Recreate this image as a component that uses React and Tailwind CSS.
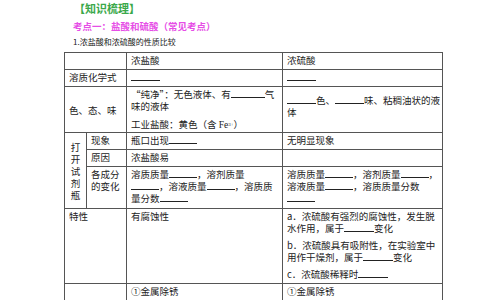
const Blank = ({ w = 'w-[27px]' }) => (
  <span className={`inline-block ${w} border-b border-[#222] align-baseline h-[9px]`} />
);

const Line = ({ children }) => <div className="whitespace-nowrap h-[12px]">{children}</div>;

export default function App() {
  const td = 'border border-[#555] align-top px-[4px] pt-[1px]';
  return (
    <div
      className="w-[484px] h-[300px] overflow-hidden bg-white text-[#222]"
      style={{ fontFamily: '"Noto Sans CJK SC", "Noto Sans", sans-serif' }}
    >
      <div className="pl-[74px] pt-[1px] text-[11px] leading-[15px] font-bold text-[#3aa84a]">【知识梳理】</div>
      <div className="pl-[73px] pt-[3px] text-[9.5px] leading-[14px] font-bold text-[#e64ee6]">
        考点一：盐酸和硫酸（常见考点）
      </div>
      <div className="pl-[73px] pt-[3px] text-[8px] leading-[12px] text-[#222]">1.浓盐酸和浓硫酸的性质比较</div>

      <table className="ml-[64px] mt-[4px] w-[378px] table-fixed border-collapse text-[9.5px] leading-[12px]">
        <colgroup>
          <col className="w-[22px]" />
          <col className="w-[40px]" />
          <col className="w-[156px]" />
          <col className="w-[160px]" />
        </colgroup>
        <tbody>
          <tr className="h-[17px]">
            <td className={`${td} h-[17px]`} colSpan={2}></td>
            <td className={td}>浓盐酸</td>
            <td className={td}>浓硫酸</td>
          </tr>
          <tr className="h-[17px]">
            <td className={`${td} h-[17px]`} colSpan={2}>溶质化学式</td>
            <td className={td}><Blank w="w-[29px]" /></td>
            <td className={td}><Blank w="w-[29px]" /></td>
          </tr>
          <tr className="h-[46px]">
            <td className={`${td} h-[46px] !align-middle`} colSpan={2}>色、态、味</td>
            <td className={td}>
              <Line>“纯净”：无色液体、有<Blank w="w-[34px]" />气</Line>
              <Line>味的液体</Line>
              <div className="mt-[6px] whitespace-nowrap h-[12px]">
                工业盐酸：黄色（含 <span style={{ fontFamily: '"Liberation Serif", serif' }}>Fe<sup className="text-[5px]">3+</sup></span>）
              </div>
            </td>
            <td className={`${td} !align-middle`}>
              <Line><Blank w="w-[29px]" />色、<Blank w="w-[29px]" />味、粘稠油状的液</Line>
              <Line>体</Line>
              <div className="h-[8px]" />
            </td>
          </tr>
          <tr className="h-[17px]">
            <td className={`${td} !align-middle !px-0 text-center`} rowSpan={3}>
              <div className="leading-[12px]">
                <div>打</div><div>开</div><div>试</div><div>剂</div><div>瓶</div>
              </div>
            </td>
            <td className={`${td} h-[17px]`}>现象</td>
            <td className={td}>瓶口出现<Blank w="w-[28px]" /></td>
            <td className={td}>无明显现象</td>
          </tr>
          <tr className="h-[17px]">
            <td className={`${td} h-[17px]`}>原因</td>
            <td className={td}>浓盐酸易</td>
            <td className={td}></td>
          </tr>
          <tr className="h-[42px]">
            <td className={`${td} h-[42px]`}><div>各成分</div><div>的变化</div></td>
            <td className={td}>
              <Line>溶质质量<Blank w="w-[28px]" />，溶剂质量</Line>
              <Line><Blank w="w-[28px]" />，溶液质量<Blank w="w-[28px]" />，溶质质</Line>
              <Line>量分数<Blank w="w-[28px]" /></Line>
            </td>
            <td className={td}>
              <Line>溶质质量<Blank w="w-[28px]" />，溶剂质量<Blank w="w-[28px]" />，</Line>
              <Line>溶液质量<Blank w="w-[28px]" />，溶质质量分数</Line>
              <Line><Blank w="w-[28px]" /></Line>
            </td>
          </tr>
          <tr className="h-[75px]">
            <td className={`${td} h-[75px]`} colSpan={2}>特性</td>
            <td className={td}>有腐蚀性</td>
            <td className={td}>
              <Line>a．浓硫酸有强烈的腐蚀性，发生脱</Line>
              <Line>水作用，属于<Blank w="w-[30px]" />变化</Line>
              <div className="h-[5px]" />
              <Line>b．浓硫酸具有吸附性，在实验室中</Line>
              <Line>用作干燥剂，属于<Blank w="w-[30px]" />变化</Line>
              <div className="h-[5px]" />
              <Line>c．浓硫酸稀释时<Blank w="w-[30px]" /></Line>
            </td>
          </tr>
          <tr className="h-[30px]">
            <td className={`${td} h-[30px]`} colSpan={2}></td>
            <td className={td}>①金属除锈</td>
            <td className={td}>①金属除锈</td>
          </tr>
        </tbody>
      </table>
    </div>
  );
}
